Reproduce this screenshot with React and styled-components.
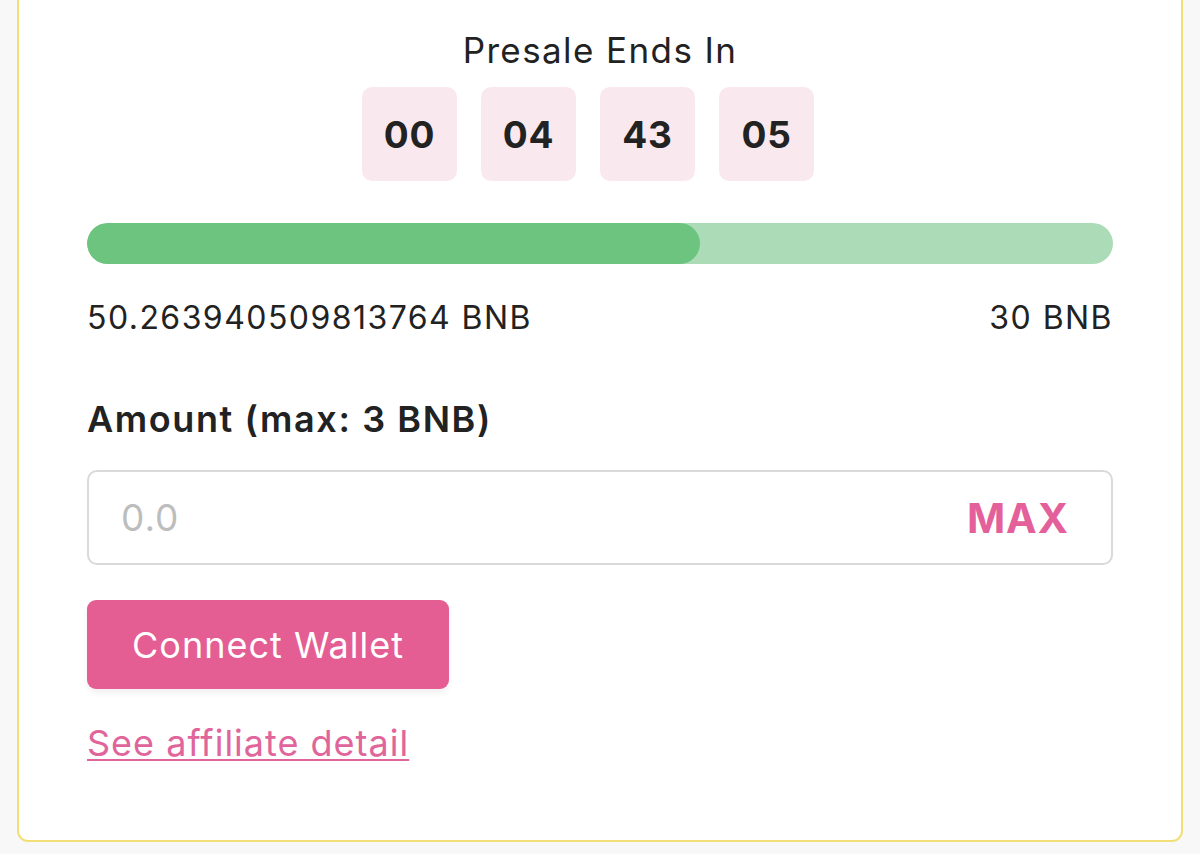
import React from "react";
import styled, { createGlobalStyle } from "styled-components";

const GlobalStyle = createGlobalStyle`
  html, body {
    margin: 0;
    padding: 0;
    background: #f8f8f9;
  }
  body {
    font-family: Inter, "Noto Sans", "Liberation Sans", sans-serif;
    color: #222;
  }
`;

const countdown = ["00", "04", "43", "05"];
const raised = 50.263940509813764;
const progress = 59.7;

const App = () => {
  return (
    <>
      <GlobalStyle />
      <Page>
        <Card>
          <Title>Presale Ends In</Title>
          <Countdown>
            {countdown.map((value, idx) => (
              <TimeBox key={idx}>{value}</TimeBox>
            ))}
          </Countdown>
          <Track>
            <Fill style={{ width: `${progress}%` }} />
          </Track>
          <AmountRow>
            <span>{raised} BNB</span>
            <span>30 BNB</span>
          </AmountRow>
          <Label>Amount (max: 3 BNB)</Label>
          <InputBox>
            <Input placeholder="0.0" />
            <MaxButton>MAX</MaxButton>
          </InputBox>
          <ConnectButton>Connect Wallet</ConnectButton>
          <Link href="#">See affiliate detail</Link>
        </Card>
      </Page>
    </>
  );
};

const Page = styled.div`
  padding: 0 17px 12px 17px;
`;

const Card = styled.div`
  display: flex;
  flex-direction: column;
  align-items: stretch;
  background: #fff;
  border: 2px solid #f2df78;
  border-top: none;
  border-radius: 0 0 11px 11px;
  padding: 30px 68px 76px 68px;
`;

const Title = styled.div`
  font-size: 35px;
  line-height: 40px;
  letter-spacing: 1.4px;
  text-align: center;
  color: #222;
`;

const Countdown = styled.div`
  display: flex;
  justify-content: center;
  margin-top: 17px;
`;

const TimeBox = styled.div`
  width: 95px;
  height: 94px;
  margin-right: 24px;
  border-radius: 10px;
  background: #f9e9ee;
  display: flex;
  align-items: center;
  justify-content: center;
  font-size: 37px;
  font-weight: 700;
  letter-spacing: 0.8px;
  color: #222;
`;

const Track = styled.div`
  margin-top: 42px;
  height: 41px;
  border-radius: 21px;
  background: #acdcb7;
  overflow: hidden;
`;

const Fill = styled.div`
  height: 100%;
  border-radius: 21px;
  background: #6cc47f;
`;

const AmountRow = styled.div`
  display: flex;
  justify-content: space-between;
  margin-top: 36px;
  font-size: 32px;
  line-height: 36px;
  letter-spacing: 1.45px;
  color: #222;
`;

const Label = styled.div`
  margin-top: 63px;
  font-size: 36px;
  line-height: 40px;
  font-weight: 600;
  letter-spacing: 1.6px;
  color: #222;
`;

const InputBox = styled.div`
  margin-top: 31px;
  height: 95px;
  box-sizing: border-box;
  border: 2px solid #d9d9d9;
  border-radius: 10px;
  display: flex;
  align-items: center;
  padding: 0 42px 0 32px;
`;

const Input = styled.input`
  flex: 1;
  min-width: 0;
  border: none;
  outline: none;
  background: transparent;
  font-family: inherit;
  font-size: 37px;
  letter-spacing: 1px;
  color: #222;
  padding: 0;

  &::placeholder {
    color: #bdbdbd;
  }
`;

const MaxButton = styled.button`
  border: none;
  background: none;
  padding: 0;
  font-family: inherit;
  font-size: 41px;
  font-weight: 700;
  letter-spacing: 1px;
  color: #e4609a;
  cursor: pointer;
`;

const ConnectButton = styled.button`
  align-self: flex-start;
  margin-top: 35px;
  width: 362px;
  height: 89px;
  border: none;
  border-radius: 9px;
  background: #e45e93;
  color: #fff;
  font-family: inherit;
  font-size: 36px;
  letter-spacing: 1px;
  box-shadow: 0 4px 6px rgba(0, 0, 0, 0.06);
  cursor: pointer;
`;

const Link = styled.a`
  align-self: flex-start;
  margin-top: 33px;
  font-size: 36px;
  line-height: 42px;
  letter-spacing: 1px;
  color: #e0659b;
  text-decoration: underline;
  text-decoration-thickness: 2px;
  text-underline-offset: 3px;
`;

export default App;
